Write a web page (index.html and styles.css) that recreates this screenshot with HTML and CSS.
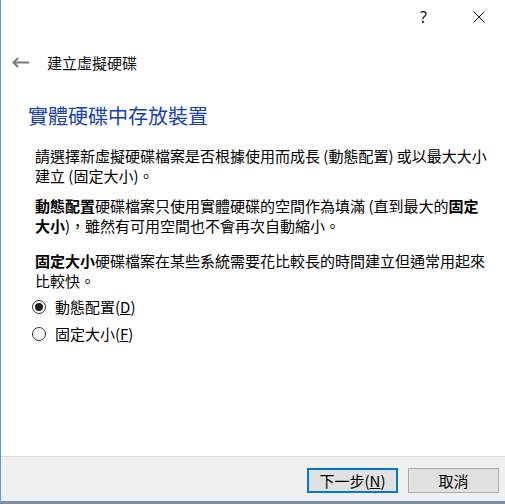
FILE: index.html
```html
<!DOCTYPE html>
<html lang="zh-Hant">
<head>
<meta charset="utf-8">
<title>建立虛擬硬碟</title>
<link rel="stylesheet" href="styles.css">
</head>
<body>
<div class="window">
  <div class="titlebar">
    <span class="help">?</span>
    <span class="close">
      <svg width="12" height="12" viewBox="0 0 12 12"><path d="M0.5 0.5 L11.5 11.5 M11.5 0.5 L0.5 11.5" stroke="#111" stroke-width="1" fill="none"/></svg>
    </span>
  </div>
  <div class="nav">
    <svg class="back" width="17" height="11" viewBox="0 0 17 11"><path d="M1.5 5.5 H17 M6 1 L1.5 5.5 L6 10" stroke="#7a7a7a" stroke-width="2" fill="none"/></svg>
    <span class="nav-title">建立虛擬硬碟</span>
  </div>
  <div class="content">
    <h1 class="heading">實體硬碟中存放裝置</h1>
    <p class="para p1">請選擇新虛擬硬碟檔案是否根據使用而成長 (動態配置) 或以最大大小建立 (固定大小)。</p>
    <p class="para p2"><b>動態配置</b>硬碟檔案只使用實體硬碟的空間作為填滿 (直到最大的<b>固定大小</b>)，雖然有可用空間也不會再次自動縮小。</p>
    <p class="para p3"><b>固定大小</b>硬碟檔案在某些系統需要花比較長的時間建立但通常用起來比較快。</p>
    <div class="options">
      <label class="option"><input type="radio" name="mode" checked><span>動態配置(<u>D</u>)</span></label>
      <label class="option"><input type="radio" name="mode"><span>固定大小(<u>F</u>)</span></label>
    </div>
  </div>
  <div class="footer">
    <button class="btn btn-default">下一步(<u>N</u>)</button>
    <button class="btn">取消</button>
  </div>
</div>
</body>
</html>
```
FILE: styles.css
```css
html, body {
  margin: 0;
  padding: 0;
  background: #8a8a8a;
}
body {
  width: 505px;
  height: 504px;
  overflow: hidden;
  font-family: "Noto Sans CJK TC", "Noto Sans", sans-serif;
  color: #000;
}
.window {
  box-sizing: border-box;
  width: 505px;
  height: 502px;
  background: #fff;
  border-left: 1px solid #5b9be6;
  border-bottom: 1px solid #5b9be6;
  display: flex;
  flex-direction: column;
}
.titlebar {
  height: 32px;
  display: flex;
  justify-content: flex-end;
  align-items: center;
}
.help {
  font-family: "Noto Sans", sans-serif;
  font-size: 16px;
  line-height: 20px;
  color: #111;
  margin-right: 46px;
  padding-top: 1px;
}
.close {
  display: flex;
  margin-right: 20px;
  padding-top: 2px;
}
.nav {
  display: flex;
  align-items: center;
  height: 20px;
  margin-top: 21px;
  padding-left: 11px;
}
.back {
  display: block;
  margin-top: -2px;
}
.nav-title {
  font-size: 15px;
  line-height: 20px;
  margin-left: 18px;
  color: #111;
}
.content {
  flex: 1;
  padding-left: 27px;
}
.heading {
  margin: 30px 0 0;
  font-size: 20px;
  line-height: 26px;
  font-weight: normal;
  color: #1a3fb8;
}
.para {
  margin: 0;
  width: 457px;
  margin-left: 7px;
  font-size: 15px;
  line-height: 20px;
}
.para b {
  font-weight: bold;
}
.p1 { margin-top: 17px; }
.p2 { margin-top: 10px; }
.p3 { margin-top: 15px; }
.options {
  margin-top: 5px;
  margin-left: 4px;
  display: flex;
  flex-direction: column;
  gap: 6px;
}
.option {
  display: flex;
  align-items: center;
  height: 21px;
  font-size: 15px;
}
.option input {
  appearance: none;
  -webkit-appearance: none;
  margin: 0 9px 0 0;
  width: 14px;
  height: 14px;
  border: 1px solid #333;
  border-radius: 50%;
  box-sizing: border-box;
  display: flex;
  align-items: center;
  justify-content: center;
  background: #fff;
}
.option input:checked::after {
  content: "";
  width: 8px;
  height: 8px;
  border-radius: 50%;
  background: #222;
}
.footer {
  height: 45px;
  box-sizing: border-box;
  border-top: 1px solid #dfdfdf;
  background: #f0f0f0;
  display: flex;
  justify-content: flex-end;
  align-items: flex-start;
  padding-top: 11px;
  padding-right: 6px;
  gap: 10px;
}
.btn {
  box-sizing: border-box;
  width: 91px;
  height: 25px;
  padding: 0;
  background: #e1e1e1;
  border: 1px solid #adadad;
  font-family: "Noto Sans CJK TC", sans-serif;
  font-size: 15px;
  line-height: 20px;
  color: #000;
}
.btn-default {
  border: 2px solid #0078d7;
}
```
